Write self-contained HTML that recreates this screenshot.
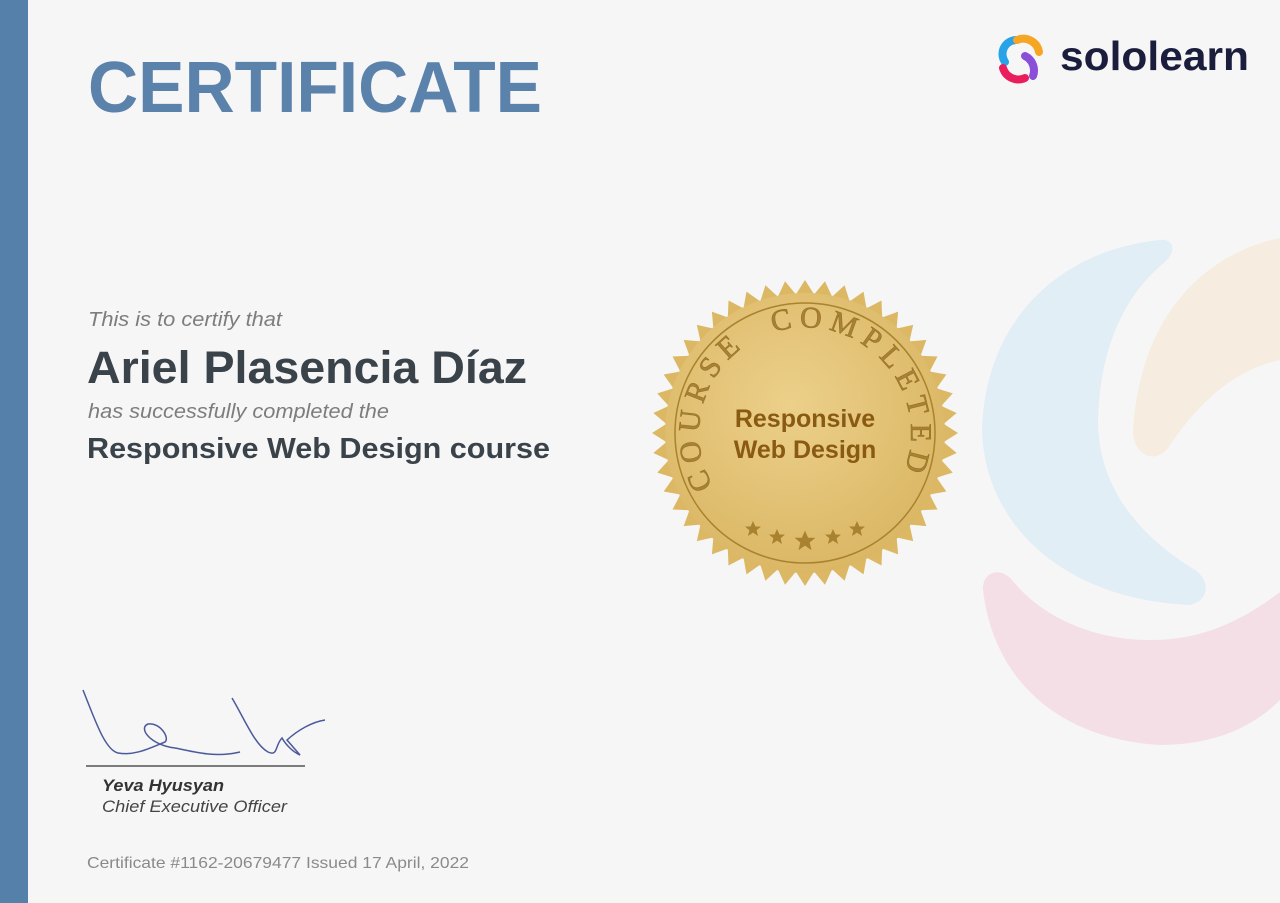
<!DOCTYPE html>
<html><head><meta charset="utf-8"><style>
html,body{margin:0;padding:0;width:1280px;height:903px;overflow:hidden;background:#f6f6f6}
svg{display:block}
</style></head><body>
<svg width="1280" height="903" viewBox="0 0 1280 903" xmlns="http://www.w3.org/2000/svg" font-family="Liberation Sans, Arial, sans-serif">
<rect width="1280" height="903" fill="#f6f6f7"/>
<rect width="28" height="903" fill="#5580a9"/>

<!-- background swirl -->
<path d="M1160,240 C1060,250 985,320 982,430 C985,530 1070,600 1190,605 C1210,600 1210,580 1195,570 C1130,530 1098,480 1098,420 C1100,340 1130,290 1165,262 C1178,250 1172,238 1160,240 Z" fill="#e1eef6"/>
<path d="M1280,238 C1200,255 1140,320 1133,430 C1133,455 1155,465 1168,448 C1200,400 1235,370 1280,360 Z" fill="#f6ecdf"/>
<path d="M983,590 C995,690 1070,740 1160,745 C1210,745 1250,730 1280,700 L1280,592 C1230,630 1190,640 1150,640 C1090,640 1040,615 1012,580 C1000,566 982,572 983,590 Z" fill="#f5dfe6"/>

<!-- logo -->
<g transform="translate(1021,58)" fill="none" stroke-linecap="round" stroke-width="8">
 <path d="M-4,-18 A14,14 0 0 0 -16,4" stroke="#29a3e8"/>
 <path d="M-4,-18 A16,16 0 0 1 18,-6" stroke="#f6a623"/>
 <path d="M4,-2 A16,16 0 0 1 12,18" stroke="#8a4fd8"/>
 <path d="M-18,10 A16,16 0 0 0 4,20" stroke="#ea1e5c"/>
</g>
<text x="1060" y="70" font-size="41" font-weight="bold" fill="#1b1d3c" textLength="189" lengthAdjust="spacingAndGlyphs">sololearn</text>

<!-- heading -->
<text x="88" y="112" font-size="72" font-weight="bold" fill="#5a82ab" textLength="454" lengthAdjust="spacingAndGlyphs">CERTIFICATE</text>

<text x="88" y="326" font-size="20" font-style="italic" fill="#7d7d7d" textLength="194" lengthAdjust="spacingAndGlyphs">This is to certify that</text>
<text x="87" y="383" font-size="45" font-weight="bold" fill="#3a424a" textLength="440" lengthAdjust="spacingAndGlyphs">Ariel Plasencia Díaz</text>
<text x="88" y="418" font-size="20" font-style="italic" fill="#7d7d7d" textLength="301" lengthAdjust="spacingAndGlyphs">has successfully completed the</text>
<text x="87" y="458" font-size="29" font-weight="bold" fill="#3a424a" textLength="463" lengthAdjust="spacingAndGlyphs">Responsive Web Design course</text>

<!-- signature -->
<path d="M83,690 C95,720 105,750 118,753 C135,756 150,748 165,742 C170,738 160,722 148,724 C138,728 150,745 175,748 C195,752 215,758 240,752" fill="none" stroke="#4b5a9a" stroke-width="1.5"/>
<path d="M232,698 C245,720 255,745 268,752 C278,757 275,745 282,738 C286,745 293,752 300,755 L287,740 C298,730 312,722 325,720" fill="none" stroke="#4b5a9a" stroke-width="1.5"/>
<line x1="86" y1="766" x2="305" y2="766" stroke="#333" stroke-width="1.2"/>
<text x="102" y="791" font-size="17" font-weight="bold" font-style="italic" fill="#333" textLength="122" lengthAdjust="spacingAndGlyphs">Yeva Hyusyan</text>
<text x="102" y="812" font-size="17" font-style="italic" fill="#444" textLength="185" lengthAdjust="spacingAndGlyphs">Chief Executive Officer</text>

<text x="87" y="868" font-size="16" fill="#8a8a8a" textLength="382" lengthAdjust="spacingAndGlyphs">Certificate #1162-20679477 Issued 17 April, 2022</text>

<!-- seal -->
<defs>
 <radialGradient id="g" cx="0.45" cy="0.4" r="0.7">
  <stop offset="0" stop-color="#ecd08a"/><stop offset="1" stop-color="#d8b35f"/>
 </radialGradient>
 <polygon id="t" points="-9.5,-138 0,-153 9.5,-138"/>
 <path id="arc" d="M-92,53 A106,106 0 1 1 92,53"/>
 <polygon id="s" points="0,-8 2.4,-2.5 8,-2.5 3.6,1.2 5,7 0,3.6 -5,7 -3.6,1.2 -8,-2.5 -2.4,-2.5"/>
</defs>
<g transform="translate(805,433)">
 <g fill="#dcb865">
  <use href="#t"/><use href="#t" transform="rotate(7.5)"/><use href="#t" transform="rotate(15)"/><use href="#t" transform="rotate(22.5)"/><use href="#t" transform="rotate(30)"/><use href="#t" transform="rotate(37.5)"/><use href="#t" transform="rotate(45)"/><use href="#t" transform="rotate(52.5)"/><use href="#t" transform="rotate(60)"/><use href="#t" transform="rotate(67.5)"/><use href="#t" transform="rotate(75)"/><use href="#t" transform="rotate(82.5)"/><use href="#t" transform="rotate(90)"/><use href="#t" transform="rotate(97.5)"/><use href="#t" transform="rotate(105)"/><use href="#t" transform="rotate(112.5)"/><use href="#t" transform="rotate(120)"/><use href="#t" transform="rotate(127.5)"/><use href="#t" transform="rotate(135)"/><use href="#t" transform="rotate(142.5)"/><use href="#t" transform="rotate(150)"/><use href="#t" transform="rotate(157.5)"/><use href="#t" transform="rotate(165)"/><use href="#t" transform="rotate(172.5)"/><use href="#t" transform="rotate(180)"/><use href="#t" transform="rotate(187.5)"/><use href="#t" transform="rotate(195)"/><use href="#t" transform="rotate(202.5)"/><use href="#t" transform="rotate(210)"/><use href="#t" transform="rotate(217.5)"/><use href="#t" transform="rotate(225)"/><use href="#t" transform="rotate(232.5)"/><use href="#t" transform="rotate(240)"/><use href="#t" transform="rotate(247.5)"/><use href="#t" transform="rotate(255)"/><use href="#t" transform="rotate(262.5)"/><use href="#t" transform="rotate(270)"/><use href="#t" transform="rotate(277.5)"/><use href="#t" transform="rotate(285)"/><use href="#t" transform="rotate(292.5)"/><use href="#t" transform="rotate(300)"/><use href="#t" transform="rotate(307.5)"/><use href="#t" transform="rotate(315)"/><use href="#t" transform="rotate(322.5)"/><use href="#t" transform="rotate(330)"/><use href="#t" transform="rotate(337.5)"/><use href="#t" transform="rotate(345)"/><use href="#t" transform="rotate(352.5)"/>
 </g>
 <circle r="140" fill="url(#g)"/>
 <circle r="130" fill="none" stroke="#a8832f" stroke-width="1.5"/>
 <text font-family="Liberation Serif, serif" font-size="30" fill="#a88232" stroke="#94702a" stroke-width="0.6" xml:space="preserve"><textPath href="#arc" textLength="425" lengthAdjust="spacing">COURSE  COMPLETED</textPath></text>
 <text x="0" y="-6" text-anchor="middle" font-size="25" font-weight="bold" fill="#8a5a12">Responsive</text>
 <text x="0" y="25" text-anchor="middle" font-size="25" font-weight="bold" fill="#8a5a12">Web Design</text>
 <g fill="#a8822f">
  <use href="#s" transform="translate(-52,96)"/><use href="#s" transform="translate(-28,104)"/><use href="#s" transform="translate(0,108) scale(1.3)"/><use href="#s" transform="translate(28,104)"/><use href="#s" transform="translate(52,96)"/>
 </g>
</g>
</svg>
</body></html>
